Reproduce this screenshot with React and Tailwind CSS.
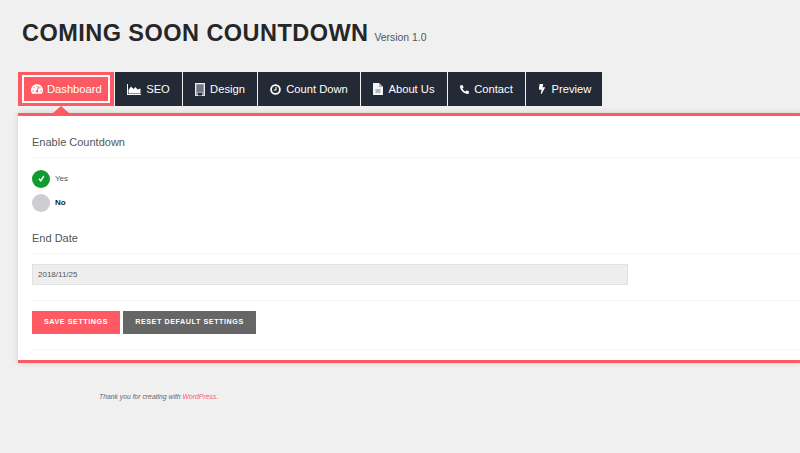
import React from "react";
import { FaTachometerAlt, FaPhoneAlt, FaBolt } from "react-icons/fa";

const font = { fontFamily: '"Liberation Sans", Arial, sans-serif' };

function AreaIcon() {
  return (
    <svg width="14" height="11" viewBox="0 0 14 11" className="shrink-0">
      <path d="M0 0h1v10h13v1H0z" fill="#fff" />
      <path d="M1.5 9.5V6l2.5-3.5 2.5 2.5L8.5 3l2 2.5L13.5 4.5v5z" fill="#fff" />
    </svg>
  );
}

function DesignIcon() {
  return (
    <svg width="10" height="13" viewBox="0 0 10 13" className="shrink-0">
      <rect x="0.5" y="0.5" width="9" height="12" fill="#9aa0a8" stroke="#e8e8ea" />
      <rect x="2" y="2" width="6" height="7" fill="#6f7680" />
      <rect x="3" y="10" width="4" height="2.5" fill="#232a35" />
    </svg>
  );
}

function ClockIcon() {
  return (
    <svg width="11" height="11" viewBox="0 0 11 11" className="shrink-0">
      <circle cx="5.5" cy="5.5" r="4.4" fill="none" stroke="#fff" strokeWidth="1.8" />
      <path d="M6 3v3H3.8" fill="none" stroke="#fff" strokeWidth="1.1" />
    </svg>
  );
}

function FileIcon() {
  return (
    <svg width="10" height="12" viewBox="0 0 10 12" className="shrink-0">
      <path d="M0 0h6l4 4v8H0z" fill="#f4f4f4" />
      <rect x="2.5" y="6" width="5" height="4" fill="#b4b8be" />
      <path d="M6 0v4h4" fill="#aeb2b8" />
    </svg>
  );
}

const tabs = [
  { label: "SEO", icon: <AreaIcon />, w: "w-[67px]" },
  { label: "Design", icon: <DesignIcon />, w: "w-[74px]" },
  { label: "Count Down", icon: <ClockIcon />, w: "w-[102px]" },
  { label: "About Us", icon: <FileIcon />, w: "w-[86px]" },
  { label: "Contact", icon: <FaPhoneAlt size={9} />, w: "w-[77px]" },
  { label: "Preview", icon: <FaBolt size={10} />, w: "w-[76px]" },
];

function Divider({ className = "" }) {
  return <div className={"h-px bg-[#f5f5f5] " + className} />;
}

export default function App() {
  return (
    <div style={font} className="relative w-[800px] h-[453px] overflow-hidden bg-[#f0f0f0]">
      <div className="pl-[22px] pt-[19px] h-[72px] flex items-start">
        <h1 className="text-[23.5px] leading-[28px] font-bold tracking-[0.46px] text-[#262626] whitespace-nowrap">
          COMING SOON COUNTDOWN
        </h1>
        <span className="ml-[6px] mt-[12px] text-[10.4px] leading-[13px] text-[#50555a]">Version 1.0</span>
      </div>

      <div className="ml-[18px] flex gap-px h-[34px]">
        <div className="relative w-[96px] bg-[#ff5a64] px-[4px] py-[3px]">
          <div className="h-full border-2 border-white flex items-center pl-[7px] gap-[4px] text-white text-[11.2px]">
            <FaTachometerAlt size={12} />
            <span>Dashboard</span>
          </div>
          <div className="absolute left-[35px] top-[34px] w-0 h-0 border-l-[8px] border-r-[8px] border-b-[7px] border-l-transparent border-r-transparent border-b-[#ff5a64]" />
        </div>
        {tabs.map(({ label, icon, w }) => (
          <div key={label} className={w + " bg-[#232a35] flex items-center justify-center gap-[5px] text-white text-[11.2px] whitespace-nowrap"}>
            {icon}
            <span>{label}</span>
          </div>
        ))}
      </div>

      <div className="ml-[18px] mt-[7px] h-[250px] bg-white border-t-[3px] border-b-[3px] border-[#ff5a64] shadow-[0_0_6px_rgba(0,0,0,0.14)] pl-[14px]">
        <div className="pt-[19px] text-[11px] leading-[15px] text-[#555555]">Enable Countdown</div>
        <Divider className="mt-[7px]" />

        <div className="mt-[11px] flex items-center gap-[5px] h-[19px]">
          <div className="w-[18px] h-[18px] rounded-full bg-[#119a2e] flex items-center justify-center">
            <svg width="7" height="7" viewBox="0 0 7 7">
              <path d="M1 3.8 2.8 5.8 5.8 1" fill="none" stroke="#fff" strokeWidth="1.5" />
            </svg>
          </div>
          <span className="text-[8px] text-[#555555]">Yes</span>
        </div>
        <div className="mt-[5px] flex items-center gap-[5px] h-[19px]">
          <div className="w-[18px] h-[18px] rounded-full bg-[#cdced2]" />
          <span className="text-[8px] font-bold text-[#222222]">No</span>
        </div>

        <div className="mt-[19px] text-[11px] leading-[15px] text-[#555555]">End Date</div>
        <Divider className="mt-[7px]" />

        <div className="mt-[10px] w-[596px] h-[21px] bg-[#eeeeee] border border-[#e2e2e2] flex items-center pl-[5px] text-[8px] text-[#555555]">
          2018/11/25
        </div>
        <Divider className="mt-[15px]" />

        <div className="mt-[10px] flex gap-[3px]">
          <div className="w-[88px] h-[23px] bg-[#ff5a64] flex items-center justify-center text-white text-[7.2px] font-bold tracking-[0.55px]">
            SAVE SETTINGS
          </div>
          <div className="w-[133px] h-[23px] bg-[#666666] flex items-center justify-center text-white text-[7.2px] font-bold tracking-[0.55px] whitespace-nowrap">
            RESET DEFAULT SETTINGS
          </div>
        </div>
        <Divider className="mt-[15px]" />
      </div>

      <div className="ml-[99px] mt-[28px] text-[6.8px] leading-[12px] italic text-[#666666]">
        Thank you for creating with <span className="text-[#ff5a64]">WordPress</span>.
      </div>
    </div>
  );
}
